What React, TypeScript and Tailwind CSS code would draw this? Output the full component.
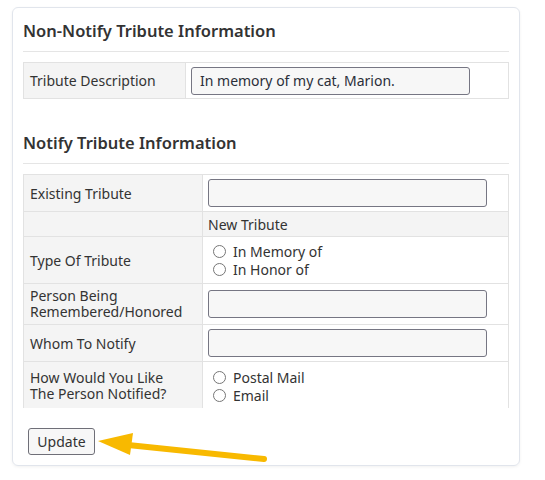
import React from "react";

const font = { fontFamily: '"Noto Sans", "Open Sans", sans-serif' };

function Radio({ label }: { label: string }) {
  return (
    <div className="flex items-center h-[18px]">
      <span className="ml-[5px] mr-[7px] inline-block w-[13px] h-[13px] rounded-full border border-[#767676] bg-white" />
      <span>{label}</span>
    </div>
  );
}

function TextBox({ value = "" }: { value?: string }) {
  return (
    <div className="w-[279px] h-[28px] rounded-[3px] border border-[#767683] bg-[#f7f7f7] px-[8px] flex items-center text-[#2b2f3a]">
      {value}
    </div>
  );
}

export default function App() {
  return (
    <div className="bg-white w-[545px] h-[480px] pl-[12px] pt-[7px] text-[14px] text-[#333]" style={font}>
      <div className="relative w-[508px] h-[459px] rounded-[6px] border border-[#e1e5ec] shadow-[0_1px_3px_rgba(0,0,0,0.06)] px-[10px]">
        <div className="pt-[11px] pb-[8px] text-[16.5px] leading-[24px] font-semibold text-[#333] border-b border-[#e5e5e5]">
          Non-Notify Tribute Information
        </div>
        <div className="mt-[10px] flex border border-[#e2e2e2] h-[37px]">
          <div className="w-[162px] bg-[#f4f4f4] border-r border-[#e2e2e2] flex items-center pl-[6px]">
            Tribute Description
          </div>
          <div className="flex items-center pl-[5px]">
            <TextBox value="In memory of my cat, Marion." />
          </div>
        </div>

        <div className="pt-[32px] pb-[8px] text-[16.5px] leading-[24px] font-semibold text-[#333] border-b border-[#e5e5e5]">
          Notify Tribute Information
        </div>

        <div className="mt-[10px] h-[234px] overflow-hidden border-x border-t border-[#e2e2e2]">
          <div className="flex h-[37px] border-b border-[#e2e2e2]">
            <div className="w-[179px] shrink-0 bg-[#f4f4f4] border-r border-[#e2e2e2] flex items-center pl-[6px]">
              Existing Tribute
            </div>
            <div className="flex items-center pl-[5px]">
              <TextBox />
            </div>
          </div>
          <div className="flex h-[25px] border-b border-[#e2e2e2] bg-[#f4f4f4]">
            <div className="w-[179px] shrink-0 border-r border-[#e2e2e2]" />
            <div className="flex items-center pl-[5px]">New Tribute</div>
          </div>
          <div className="flex h-[47px] border-b border-[#e2e2e2]">
            <div className="w-[179px] shrink-0 bg-[#f4f4f4] border-r border-[#e2e2e2] flex items-center pl-[6px]">
              Type Of Tribute
            </div>
            <div className="flex flex-col justify-center pl-[5px]">
              <Radio label="In Memory of" />
              <Radio label="In Honor of" />
            </div>
          </div>
          <div className="flex h-[41px] border-b border-[#e2e2e2]">
            <div className="w-[179px] shrink-0 bg-[#f4f4f4] border-r border-[#e2e2e2] flex items-center pl-[6px] leading-[16px]">
              <p>
                Person Being
                <br />
                Remembered/Honored
              </p>
            </div>
            <div className="flex items-center pl-[5px]">
              <TextBox />
            </div>
          </div>
          <div className="flex h-[37px] border-b border-[#e2e2e2]">
            <div className="w-[179px] shrink-0 bg-[#f4f4f4] border-r border-[#e2e2e2] flex items-center pl-[6px]">
              Whom To Notify
            </div>
            <div className="flex items-center pl-[5px]">
              <TextBox />
            </div>
          </div>
          <div className="flex h-[49px] border-b border-[#e2e2e2]">
            <div className="w-[179px] shrink-0 bg-[#f4f4f4] border-r border-[#e2e2e2] flex items-center pl-[6px] leading-[16px]">
              <p>
                How Would You Like
                <br />
                The Person Notified?
              </p>
            </div>
            <div className="flex flex-col justify-center pl-[5px]">
              <Radio label="Postal Mail" />
              <Radio label="Email" />
            </div>
          </div>
        </div>

        <div className="mt-[20px] pl-[5px]">
          <button className="w-[67px] h-[27px] rounded-[3px] border border-[#6f6f78] bg-[#f7f7f7] text-[14px] text-[#333] flex items-center justify-center">
            Update
          </button>
        </div>

        <svg className="absolute left-0 top-0 pointer-events-none" width="508" height="459" viewBox="0 0 508 459">
          <g transform="translate(-13,-8)">
            <line x1="128" y1="445" x2="264" y2="459" stroke="#f8b900" strokeWidth="6" strokeLinecap="round" />
            <polygon points="98,441 133,433 130,455" fill="#f8b900" />
          </g>
        </svg>
      </div>
    </div>
  );
}
